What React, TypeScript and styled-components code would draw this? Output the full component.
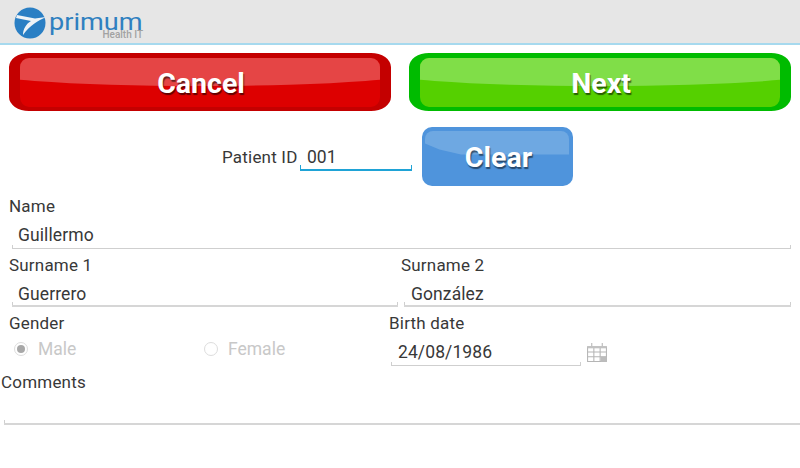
import React from "react";
import styled, { createGlobalStyle } from "styled-components";

const GlobalStyle = createGlobalStyle`
  html, body {
    margin: 0;
    padding: 0;
    background: #ffffff;
    font-family: Roboto, "Liberation Sans", sans-serif;
  }
  * {
    box-sizing: border-box;
  }
`;

const Page = styled.div`
  width: 800px;
  height: 468px;
  overflow: hidden;
  background: #ffffff;
  color: #383838;
  font-size: 17.5px;
`;

const Header = styled.div`
  height: 45px;
  background: #e6e6e6;
  border-bottom: 2px solid #a6d9ee;
  display: flex;
  align-items: flex-start;
  padding: 7px 0 0 14px;
  gap: 3px;
`;

const LogoText = styled.div`
  display: flex;
  flex-direction: column;
  align-items: flex-end;
  width: 94px;
  padding-top: 8px;
`;

const LogoName = styled.div`
  align-self: flex-start;
  font-size: 24px;
  line-height: 15px;
  font-weight: 400;
  color: #2f80c0;
  transform: scaleX(1.13);
  transform-origin: left center;
`;

const LogoSub = styled.div`
  font-size: 10px;
  line-height: 10px;
  font-weight: 500;
  color: #a2a2a2;
`;

const ActionRow = styled.div`
  display: flex;
  gap: 18px;
  padding: 8px 9px 0;
`;

const GlossButton = styled.div<{ $outer: string; $fill: string; $shine: string }>`
  position: relative;
  flex: 1;
  height: 58px;
  border-radius: 20px / 14px;
  background: ${(p) => p.$fill};
  border: solid ${(p) => p.$outer};
  border-width: 5px 11px 4px 11px;
  display: flex;
  align-items: center;
  justify-content: center;
  overflow: hidden;
  color: #ffffff;
  font-size: 28.5px;
  font-weight: 700;
  text-shadow: 1px 2px 1px rgba(0, 0, 0, 0.55);

  &::before {
    content: "";
    position: absolute;
    left: -15%;
    right: -15%;
    top: -40px;
    height: 68px;
    background: ${(p) => p.$shine};
    border-radius: 0 0 50% 50% / 0 0 17px 17px;
  }
`;

const ButtonLabel = styled.span`
  position: relative;
  margin: 1px 0 0 2px;
`;

const PatientRow = styled.div`
  display: flex;
  align-items: flex-start;
  padding: 16px 0 0 222px;
`;

const PatientLabel = styled.div`
  font-size: 17px;
  letter-spacing: 0.2px;
  line-height: 19px;
  margin-top: 21px;
  width: 78px;
  white-space: nowrap;
`;

const PatientInput = styled.div`
  position: relative;
  width: 112px;
  height: 26px;
  margin-top: 18px;
  padding: 3px 0 0 7px;
  line-height: 19px;
  border-bottom: 2px solid #1fa3d6;

  &::before,
  &::after {
    content: "";
    position: absolute;
    bottom: 0;
    width: 1px;
    height: 4px;
    background: #1fa3d6;
  }
  &::before {
    left: 0;
  }
  &::after {
    right: 0;
  }
`;

const ClearButton = styled.div`
  position: relative;
  width: 151px;
  height: 59px;
  margin-left: 10px;
  border-radius: 10px;
  background: #4f94dc;
  overflow: hidden;
  display: flex;
  align-items: center;
  justify-content: center;
  color: #ffffff;
  font-size: 28.5px;
  font-weight: 700;
  text-shadow: 1px 2px 1px rgba(0, 0, 0, 0.5);

  &::before {
    content: "";
    position: absolute;
    left: 3px;
    right: 4px;
    top: 4px;
    height: 30px;
    background: #6ea8e2;
    border-radius: 8px 8px 0 0;
    clip-path: polygon(0 0, 100% 0, 100% 78%, 25% 78%, 10% 62%, 0 42%);
  }
`;

const Row = styled.div<{ $top: number }>`
  display: flex;
  margin-top: ${(p) => p.$top}px;
`;

const Field = styled.div<{ $width: number; $labelLeft: number }>`
  width: ${(p) => p.$width}px;
  padding-left: ${(p) => p.$labelLeft}px;
  flex-shrink: 0;
`;

const Label = styled.div`
  font-size: 17px;
  letter-spacing: 0.2px;
  line-height: 19px;
`;

const Input = styled.div<{ $width: number; $indent: number; $offset: number; $height?: number; $thick?: boolean }>`
  position: relative;
  width: ${(p) => p.$width}px;
  height: ${(p) => p.$height ?? 33}px;
  margin-left: ${(p) => p.$offset}px;
  padding: 10px 0 0 ${(p) => p.$indent}px;
  line-height: 19px;
  letter-spacing: 0.1px;
  border-bottom: ${(p) => (p.$thick ? "2px solid #d6d6d6" : "1px solid #cfcfcf")};

  &::before,
  &::after {
    content: "";
    position: absolute;
    bottom: 0;
    width: 1px;
    height: 3px;
    background: #cfcfcf;
  }
  &::before {
    left: 0;
  }
  &::after {
    right: 0;
  }
`;

const GenderGroup = styled.div`
  display: flex;
  padding-top: 3px;
  margin-left: 5px;
`;

const RadioOption = styled.div`
  display: flex;
  align-items: center;
  flex-shrink: 0;
  width: 190px;
  height: 26px;
  gap: 10px;
  color: #c8c8c8;
`;

const RadioDot = styled.span<{ $checked?: boolean }>`
  width: 14px;
  height: 14px;
  border-radius: 50%;
  border: 1px solid #dddddd;
  display: flex;
  align-items: center;
  justify-content: center;

  &::after {
    content: "";
    width: 8px;
    height: 8px;
    border-radius: 50%;
    background: ${(p) => (p.$checked ? "#a8a8a8" : "transparent")};
  }
`;

const DateRow = styled.div`
  display: flex;
  align-items: flex-end;
  gap: 5px;
`;

const CalendarSvg = styled.svg`
  margin-bottom: 3px;
`;

const CalendarIcon = () => (
  <CalendarSvg width="22" height="21" viewBox="0 0 21 20">
    <g fill="none" stroke="#b5b5b5" strokeWidth="1">
      <path d="M1.5 4.5h18v14h-18z" />
      <path d="M1.5 9.5h18M1.5 14h18M7.5 4.5v14M13.5 4.5v14" />
      <path d="M5.5 1v3M15.5 1v3" />
    </g>
    <rect x="1.5" y="4" width="18" height="2" fill="#c2c2c2" />
    <rect x="14" y="14" width="6" height="5" fill="#bcbcbc" />
  </CalendarSvg>
);

const GlobeLogo = () => (
  <svg width="32" height="32" viewBox="0 0 32 32">
    <circle cx="16" cy="16" r="15.5" fill="#2a7fc4" />
    <path
      d="M3 8 L21 11.5 L32 10 C24 14 16 18 9 28 C9 22 12 17 17 14 L2 11 Z"
      fill="#eef3f7"
    />
  </svg>
);

export default function App() {
  return (
    <Page>
      <GlobalStyle />
      <Header>
        <GlobeLogo />
        <LogoText>
          <LogoName>primum</LogoName>
          <LogoSub>Health IT</LogoSub>
        </LogoText>
      </Header>

      <ActionRow>
        <GlossButton $outer="#c40000" $fill="#dd0000" $shine="#e54545">
          <ButtonLabel>Cancel</ButtonLabel>
        </GlossButton>
        <GlossButton $outer="#00bb00" $fill="#55d000" $shine="#80de48">
          <ButtonLabel>Next</ButtonLabel>
        </GlossButton>
      </ActionRow>

      <PatientRow>
        <PatientLabel>Patient ID</PatientLabel>
        <PatientInput>001</PatientInput>
        <ClearButton>
          <ButtonLabel>Clear</ButtonLabel>
        </ClearButton>
      </PatientRow>

      <Row $top={11}>
        <Field $width={800} $labelLeft={9}>
          <Label>Name</Label>
          <Input $width={779} $indent={6} $offset={3}>Guillermo</Input>
        </Field>
      </Row>

      <Row $top={7}>
        <Field $width={392} $labelLeft={9}>
          <Label>Surname 1</Label>
          <Input $width={386} $indent={6} $offset={3} $height={32} $thick>Guerrero</Input>
        </Field>
        <Field $width={408} $labelLeft={9}>
          <Label>Surname 2</Label>
          <Input $width={387} $indent={7} $offset={3} $height={32} $thick>González</Input>
        </Field>
      </Row>

      <Row $top={7}>
        <Field $width={389} $labelLeft={9}>
          <Label>Gender</Label>
          <GenderGroup>
            <RadioOption>
              <RadioDot $checked />
              Male
            </RadioOption>
            <RadioOption>
              <RadioDot />
              Female
            </RadioOption>
          </GenderGroup>
        </Field>
        <Field $width={411} $labelLeft={0}>
          <Label>Birth date</Label>
          <DateRow>
            <Input $width={190} $indent={7} $offset={2}>24/08/1986</Input>
            <CalendarIcon />
          </DateRow>
        </Field>
      </Row>

      <Row $top={7}>
        <Field $width={800} $labelLeft={1}>
          <Label>Comments</Label>
          <Input $width={800} $indent={6} $offset={3} $thick />
        </Field>
      </Row>
    </Page>
  );
}
